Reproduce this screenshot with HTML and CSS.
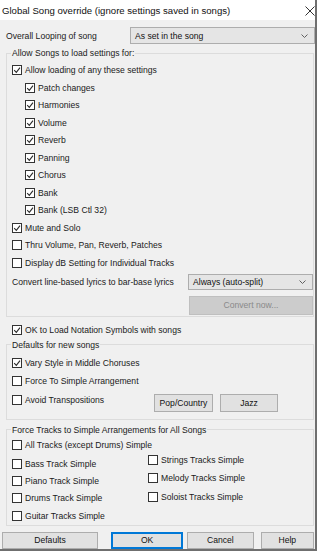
FILE: index.html
```html
<!DOCTYPE html>
<html lang="en">
<head>
  <meta charset="UTF-8" />
  <meta name="viewport" content="width=device-width, initial-scale=1.0" />
  <title>Global Song override</title>
  <link rel="stylesheet" href="styles.css">
</head>
<body>
  <div class="dialog">
    <div class="titlebar">
      <span class="title">Global Song override (ignore settings saved in songs)</span>
      <svg class="close" width="10" height="10" viewBox="0 0 10 10"><path d="M0.5 0.5 L9.5 9.5 M9.5 0.5 L0.5 9.5" /></svg>
    </div>

    <div class="content">
      <div class="looping">
        <span class="looping-label">Overall Looping of song</span>
        <div class="select">
          <span>As set in the song</span>
          <svg class="chev" width="7" height="4" viewBox="0 0 7 4"><polyline points="0.5,0.5 3.5,3.5 6.5,0.5" /></svg>
        </div>
      </div>

      <fieldset class="group group-load">
        <legend>Allow Songs to load settings for:</legend>
        <div class="check"><span class="box on"><svg viewBox="0 0 8 8"><path d="M1.2 4.2 L3.3 6.3 L7 1.6" /></svg></span>Allow loading of any these settings</div>
        <div class="sub">
          <div class="check"><span class="box on"><svg viewBox="0 0 8 8"><path d="M1.2 4.2 L3.3 6.3 L7 1.6" /></svg></span>Patch changes</div>
          <div class="check"><span class="box on"><svg viewBox="0 0 8 8"><path d="M1.2 4.2 L3.3 6.3 L7 1.6" /></svg></span>Harmonies</div>
          <div class="check"><span class="box on"><svg viewBox="0 0 8 8"><path d="M1.2 4.2 L3.3 6.3 L7 1.6" /></svg></span>Volume</div>
          <div class="check"><span class="box on"><svg viewBox="0 0 8 8"><path d="M1.2 4.2 L3.3 6.3 L7 1.6" /></svg></span>Reverb</div>
          <div class="check"><span class="box on"><svg viewBox="0 0 8 8"><path d="M1.2 4.2 L3.3 6.3 L7 1.6" /></svg></span>Panning</div>
          <div class="check"><span class="box on"><svg viewBox="0 0 8 8"><path d="M1.2 4.2 L3.3 6.3 L7 1.6" /></svg></span>Chorus</div>
          <div class="check"><span class="box on"><svg viewBox="0 0 8 8"><path d="M1.2 4.2 L3.3 6.3 L7 1.6" /></svg></span>Bank</div>
          <div class="check"><span class="box on"><svg viewBox="0 0 8 8"><path d="M1.2 4.2 L3.3 6.3 L7 1.6" /></svg></span>Bank (LSB Ctl 32)</div>
        </div>
        <div class="check"><span class="box on"><svg viewBox="0 0 8 8"><path d="M1.2 4.2 L3.3 6.3 L7 1.6" /></svg></span>Mute and Solo</div>
        <div class="check"><span class="box"></span>Thru Volume, Pan, Reverb, Patches</div>
        <div class="check"><span class="box"></span>Display dB Setting for Individual Tracks</div>

        <div class="convert">
          <span class="convert-label">Convert line-based lyrics to bar-base lyrics</span>
          <div class="select select-small">
            <span>Always (auto-split)</span>
            <svg class="chev" width="7" height="4" viewBox="0 0 7 4"><polyline points="0.5,0.5 3.5,3.5 6.5,0.5" /></svg>
          </div>
          <button class="btn btn-disabled" disabled>Convert now...</button>
        </div>
      </fieldset>

      <div class="check check-notation"><span class="box on"><svg viewBox="0 0 8 8"><path d="M1.2 4.2 L3.3 6.3 L7 1.6" /></svg></span>OK to Load Notation Symbols with songs</div>

      <fieldset class="group group-defaults">
        <legend>Defaults for new songs</legend>
        <div class="check"><span class="box on"><svg viewBox="0 0 8 8"><path d="M1.2 4.2 L3.3 6.3 L7 1.6" /></svg></span>Vary Style in Middle Choruses</div>
        <div class="check"><span class="box"></span>Force To Simple Arrangement</div>
        <div class="avoid">
          <div class="check"><span class="box"></span>Avoid Transpositions</div>
          <button class="btn btn-style">Pop/Country</button>
          <button class="btn btn-style">Jazz</button>
        </div>
      </fieldset>

      <fieldset class="group group-tracks">
        <legend>Force Tracks to Simple Arrangements for All Songs</legend>
        <div class="check check-all"><span class="box"></span>All Tracks (except Drums) Simple</div>
        <div class="tracks">
          <div class="col-left">
            <div class="check"><span class="box"></span>Bass Track Simple</div>
            <div class="check"><span class="box"></span>Piano Track Simple</div>
            <div class="check"><span class="box"></span>Drums Track Simple</div>
            <div class="check"><span class="box"></span>Guitar Tracks Simple</div>
          </div>
          <div class="col-right">
            <div class="check"><span class="box"></span>Strings Tracks Simple</div>
            <div class="check"><span class="box"></span>Melody Tracks Simple</div>
            <div class="check"><span class="box"></span>Soloist Tracks Simple</div>
          </div>
        </div>
      </fieldset>

      <div class="actions">
        <button class="btn btn-defaults">Defaults</button>
        <button class="btn btn-ok">OK</button>
        <button class="btn btn-cancel">Cancel</button>
        <button class="btn btn-help">Help</button>
      </div>
    </div>
  </div>
</body>
</html>
```

FILE: styles.css
```css
* {
  box-sizing: border-box;
}

body {
  margin: 0;
  background: #ffffff;
  font-family: "Liberation Sans", Arial, sans-serif;
  font-size: 8.6px;
  color: #1a1a1a;
}

.dialog {
  width: 317px;
  height: 551px;
  background: #f0f0f0;
  border-right: 2px solid #6f6f6f;
  border-bottom: 2px solid #6f6f6f;
  display: flex;
  flex-direction: column;
}

.titlebar {
  height: 20px;
  flex: none;
  background: #ffffff;
  display: flex;
  align-items: center;
  justify-content: space-between;
  padding: 0 0 0 2px;
}

.title {
  font-size: 9.6px;
  color: #111;
}

.close {
  fill: none;
  stroke: #333;
  stroke-width: 1;
  margin-top: 2px;
}

.content {
  flex: 1;
  padding: 7px 1px 0 6px;
  display: flex;
  flex-direction: column;
}

/* looping row */
.looping {
  display: flex;
  align-items: center;
  height: 17px;
}

.looping-label {
  width: 124px;
  flex: none;
}

.select {
  flex: 1;
  height: 17px;
  margin-right: -1px;
  background: #e5e5e5;
  border: 1px solid #adadad;
  display: flex;
  align-items: center;
  justify-content: space-between;
  padding: 0 6px 0 4px;
  color: #111;
}

.chev {
  fill: none;
  stroke: #606060;
  stroke-width: 1;
}

/* group boxes */
.group {
  margin: 0;
  min-width: 0;
  border: 1px solid #dcdcdc;
  padding: 0 0 0 5px;
}

.group legend {
  padding: 0 1px;
  margin-left: -1px;
  line-height: 12px;
}

.group-load {
  margin-top: 3px;
  padding-top: 2.2px;
  padding-bottom: 1px;
}

.check {
  display: flex;
  align-items: center;
  height: 17.55px;
  white-space: nowrap;
}

.box {
  width: 10px;
  height: 10px;
  flex: none;
  margin-right: 3px;
  background: #ffffff;
  border: 1px solid #333333;
  display: flex;
}

.box svg {
  width: 8px;
  height: 8px;
  fill: none;
  stroke: #2a2a2a;
  stroke-width: 1.1;
}

.sub {
  padding-left: 13px;
}

.convert {
  display: grid;
  grid-template-columns: 176px 1fr;
  row-gap: 4px;
  align-items: center;
}

.select-small {
  height: 16px;
  margin: 2px 0;
}

.btn {
  font-family: inherit;
  font-size: 8.6px;
  color: #111;
  background: #e1e1e1;
  border: 1px solid #adadad;
  padding: 0;
  margin: 0;
}

.btn-disabled {
  grid-column: 2;
  height: 19px;
  margin-left: 1px;
  background: #cccccc;
  border-color: #bfbfbf;
  color: #8a8a8a;
}

.check-notation {
  margin-top: 4.4px;
  padding-left: 6px;
  height: 17.6px;
}

.group-defaults {
  margin-top: 0.2px;
  padding-top: 2.75px;
  padding-bottom: 6.5px;
}

.group-defaults .check {
  height: 18.5px;
}

.avoid {
  display: flex;
  align-items: flex-start;
}

.avoid .check {
  width: 142px;
}

.btn-style {
  height: 18.5px;
  width: 59px;
  margin-top: 3.25px;
}

.btn-style + .btn-style {
  width: 58px;
  margin-left: 7px;
}

.group-tracks {
  margin-top: 3.75px;
  padding-top: 1.5px;
  padding-bottom: 0.5px;
}

.check-all {
  height: 15px;
}

.tracks {
  display: grid;
  grid-template-columns: 136px 1fr;
}

.col-left {
  padding-top: 2.85px;
}

.col-left .check {
  height: 17.3px;
}

.col-right {
  display: flex;
  flex-direction: column;
  gap: 3.5px;
}

.col-right .check {
  height: 15px;
}

/* bottom buttons */
.actions {
  display: flex;
  margin-top: 6px;
  margin-left: -4px;
}

.actions .btn {
  height: 17px;
}

.btn-defaults {
  width: 97px;
}

.btn-ok {
  width: 73px;
  margin-left: 13px;
  border-color: #0078d7;
  box-shadow: inset 0 0 0 1px #0078d7;
}

.btn-cancel {
  width: 67px;
  margin-left: 4px;
}

.btn-help {
  width: 54px;
  margin-left: 7px;
}
```
